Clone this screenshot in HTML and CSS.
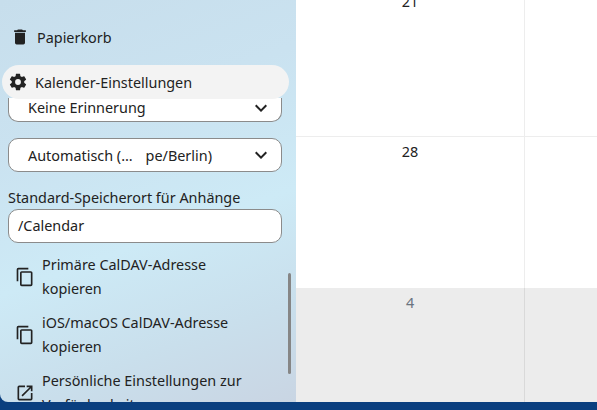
FILE: index.html
```
<!DOCTYPE html>
<html lang="de">
<head>
<meta charset="utf-8">
<title>Kalender</title>
<link rel="stylesheet" href="styles.css">
</head>
<body>
<div class="app">
  <aside class="sidebar">
    <div class="footer-items">
      <a class="nav-item trash">
        <svg class="icon" viewBox="0 0 24 24"><path d="M19 4h-3.500l-1-1h-5l-1 1H5v2h14M6 19a2 2 0 0 0 2 2h8a2 2 0 0 0 2-2V7H6v12z"/></svg>
        <span>Papierkorb</span>
      </a>
      <a class="nav-item settings">
        <svg class="icon" viewBox="0 0 24 24"><path d="M12 15.500A3.500 3.500 0 1 1 12 8.500a3.500 3.500 0 0 1 0 7zm7.430-2.530c.04-.32.07-.64.07-.97s-.03-.66-.07-1l2.110-1.630c.19-.15.24-.42.12-.64l-2-3.460c-.12-.22-.39-.31-.61-.22l-2.490 1c-.52-.39-1.060-.73-1.690-.98l-.37-2.650A.506.506 0 0 0 14 2h-4c-.25 0-.46.18-.5.420l-.37 2.650c-.63.25-1.170.59-1.690.98l-2.490-1c-.22-.09-.49 0-.61.22l-2 3.460c-.13.22-.07.49.12.64L4.570 11c-.04.34-.07.67-.07 1s.03.65.07.97l-2.110 1.660c-.19.15-.25.42-.12.64l2 3.460c.12.22.39.3.61.22l2.490-1.010c.52.4 1.060.74 1.690.99l.37 2.650c.04.24.25.42.5.42h4c.25 0 .46-.18.5-.42l.37-2.650c.63-.26 1.170-.59 1.690-.99l2.490 1.010c.22.08.49 0 .61-.22l2-3.460c.12-.22.07-.49-.12-.64l-2.110-1.660z"/></svg>
        <span>Kalender-Einstellungen</span>
      </a>
    </div>
    <div class="settings-panel">
      <div class="select clipped"><span>Keine Erinnerung</span>
        <svg class="chevron" viewBox="0 0 24 24"><path d="M7.410 8.580 12 13.170l4.590-4.590L18 10l-6 6-6-6z"/></svg>
      </div>
      <div class="select"><span class="tz">Automatisch (…<span class="tz-gap"></span>pe/Berlin)</span>
        <svg class="chevron" viewBox="0 0 24 24"><path d="M7.410 8.580 12 13.170l4.590-4.590L18 10l-6 6-6-6z"/></svg>
      </div>
      <label class="field-label">Standard-Speicherort für Anhänge</label>
      <div class="text-input">/Calendar</div>
      <a class="action">
        <svg class="icon action-icon" viewBox="0 0 24 24"><path d="M19 21H8V7h11m0-2H8a2 2 0 0 0-2 2v14a2 2 0 0 0 2 2h11a2 2 0 0 0 2-2V7a2 2 0 0 0-2-2m-3-4H4a2 2 0 0 0-2 2v14h2V3h12V1z"/></svg>
        <span>Primäre CalDAV-Adresse kopieren</span>
      </a>
      <a class="action">
        <svg class="icon action-icon" viewBox="0 0 24 24"><path d="M19 21H8V7h11m0-2H8a2 2 0 0 0-2 2v14a2 2 0 0 0 2 2h11a2 2 0 0 0 2-2V7a2 2 0 0 0-2-2m-3-4H4a2 2 0 0 0-2 2v14h2V3h12V1z"/></svg>
        <span>iOS/macOS CalDAV-Adresse kopieren</span>
      </a>
      <a class="action">
        <svg class="icon action-icon" viewBox="0 0 24 24"><path d="M14 3v2h3.590l-9.830 9.830 1.410 1.410L19 6.410V10h2V3m-2 16H5V5h7V3H5a2 2 0 0 0-2 2v14a2 2 0 0 0 2 2h14a2 2 0 0 0 2-2v-7h-2v7z"/></svg>
        <span>Persönliche Einstellungen zur Verfügbarkeit</span>
      </a>
    </div>
    <div class="scrollbar"></div>
  </aside>
  <main class="calendar">
    <div class="week week-first">
      <div class="day"><span class="num num-first">21</span></div>
      <div class="day"></div>
    </div>
    <div class="week week-second">
      <div class="day"><span class="num">28</span></div>
      <div class="day"></div>
    </div>
    <div class="week week-other">
      <div class="day"><span class="num">4</span></div>
      <div class="day"></div>
    </div>
  </main>
</div>
<div class="taskbar"></div>
</body>
</html>
```
FILE: styles.css
```
* { box-sizing: border-box; }
html, body { margin: 0; height: 100%; overflow: hidden; }
body {
  font-family: "Noto Sans", sans-serif;
  font-size: 14.4px;
  color: #222;
  background: #0a3f7f;
  display: flex;
  flex-direction: column;
  height: 410px;
}
.app { display: flex; height: 402px; flex: none; }
.sidebar {
  position: relative;
  width: 296px;
  flex: none;
  overflow: hidden;
  border-bottom-left-radius: 8px;
  background: linear-gradient(160deg, #c7deec 0%, #cae2f0 30%, #cdeaf6 58%, #c9dfec 80%, #c9d5e3 100%);
}
.footer-items { padding: 15px 4px 0 2px; }
.nav-item { display: flex; align-items: center; }
.trash { height: 44px; padding-left: 8px; gap: 7px; }
.settings {
  height: 34px;
  margin-top: 6px;
  width: 287px;
  border-radius: 17px;
  background: #f3f3f3;
  padding-left: 6px;
  gap: 7px;
  position: relative;
  z-index: 1;
}
.icon { width: 20px; height: 20px; flex: none; fill: #222; }
.settings-panel { padding: 0 14px 0 8px; margin-top: -1px; }
.select {
  height: 34px;
  border: 1px solid #8b8b8b;
  border-radius: 10px;
  background: #fff;
  display: flex;
  align-items: center;
  justify-content: space-between;
  padding: 0 9px 0 19px;
  margin-bottom: 16px;
}
.select.clipped { height: 24px; border-top: 0; border-radius: 0 0 10px 10px; padding-bottom: 4px; margin-bottom: 16px; }
.tz { display: flex; }
.tz-gap { width: 13px; flex: none; }
.chevron { width: 24px; height: 24px; fill: #222; flex: none; margin-right: -1px; }
.field-label { display: block; line-height: 20px; margin-bottom: 1px; }
.text-input {
  height: 34px;
  border: 1px solid #8b8b8b;
  border-radius: 10px;
  background: #fff;
  display: flex;
  align-items: center;
  padding: 0 0 2px 9px;
}
.action { display: flex; align-items: center; line-height: 24px; margin-top: 10px; width: 245px; }
.action-icon { margin: 0 7px 0 7px; }
.scrollbar {
  position: absolute;
  left: 288px;
  top: 273px;
  width: 3px;
  height: 101px;
  border-radius: 2px;
  background: #868686;
}
.calendar { flex: 1; display: flex; flex-direction: column; background: #fff; }
.week { display: grid; grid-template-columns: 229px 1fr; border-bottom: 1px solid #ededed; }
.week-first { height: 137px; }
.week-second { height: 151px; border-bottom: 0; }
.week-other { flex: 1; background: #ececec; border-bottom: 0; }
.day { border-right: 1px solid #ededed; text-align: center; padding-top: 5px; line-height: 20px; }
.day:last-child { border-right: 0; }
.week-other .day { border-right-color: #d9d9d9; padding-top: 5px; }
.week-other .num { color: #6a7480; }
.num-first { display: block; margin-top: -13px; }
```
